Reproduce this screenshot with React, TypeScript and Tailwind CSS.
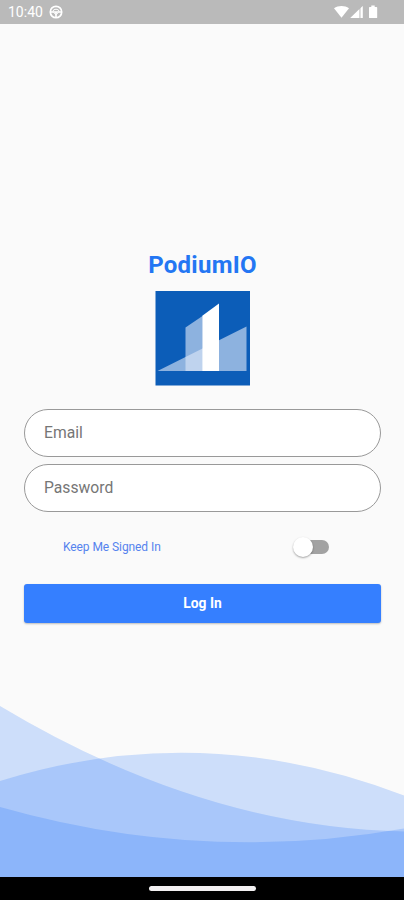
import { useState } from "react";

const StatusBar = () => {
  return (
    <div className="flex h-[24px] items-center justify-between bg-[#bababa] pl-[8px] pr-[26px] text-white">
      <div className="flex items-center gap-[6px]">
        <span className="pt-px text-[14px] leading-[23px]">10:40</span>
        <svg className="h-[14px] w-[14px]" viewBox="0 0 14 14" fill="none" stroke="currentColor">
          <circle cx="7" cy="7" r="5.7" strokeWidth="1.7" />
          <path d="M1.8 7H12.2M7 7V12.5" strokeWidth="1.6" />
          <path d="M3.8 6.8Q4 4.2 7 4.2Q10 4.2 10.2 6.8M4.6 7.4L7 9.8L9.4 7.4" strokeWidth="1" />
        </svg>
      </div>
      <svg className="h-[14px] w-[44px]" viewBox="0 0 44 14" fill="currentColor">
        <path d="M0 3.2C4.2 0.1 10.8 0.1 15 3.2L7.5 12.8Z" />
        <path d="M16.3 13L28.7 1V13Z" opacity="0.45" />
        <path d="M16.3 13L25 4.6V13Z" />
        <path d="M26.8 2.9L28.7 1V13H26.8Z" />
        <path d="M37.3 0.6H40.7V2H42.5Q43.2 2 43.2 2.7V12.4Q43.2 13.1 42.5 13.1H35.7Q35 13.1 35 12.4V2.7Q35 2 35.7 2H37.3Z" />
      </svg>
    </div>
  );
};

const Logo = () => {
  return (
    <svg className="h-[95px] w-[95px]" viewBox="0 0 95 95">
      <rect x="0.5" width="94.5" height="94.5" fill="#0c5db8" />
      <path d="M2.5 80L91.5 35.5V80Z" fill="#8db2df" />
      <path d="M30.5 36.5L47.5 25V80H30.5Z" fill="#8db2df" />
      <path d="M30.5 66L47.5 57.5V80H30.5Z" fill="#bfd3ee" />
      <path d="M47.3 24.7L64 12.5V80H47.3Z" fill="#ffffff" />
    </svg>
  );
};

const Waves = () => {
  return (
    <svg className="block h-[177px] w-full" viewBox="0 700 404 177" preserveAspectRatio="none">
      <g fill="#1b70f9" fillOpacity="0.2">
        <path d="M0 706Q202 827.3 404 831.5V877H0Z" />
        <path d="M0 781Q202 718 404 795.5V877H0Z" />
        <path d="M0 807Q202 864.5 404 828.5V877H0Z" />
      </g>
    </svg>
  );
};

interface FieldProps {
  type: string;
  placeholder: string;
}

const Field: React.FC<FieldProps> = ({ type, placeholder }) => {
  return (
    <input
      type={type}
      placeholder={placeholder}
      className="h-[48px] w-full rounded-full border border-[#999999] bg-white pb-[2px] pl-[19px] pr-4 text-[15.7px] text-black outline-none placeholder:text-[#767676]"
    />
  );
};

const App: React.FC = () => {
  const [keepSigned, setKeepSigned] = useState(false);

  return (
    <div className="flex h-[900px] w-[404px] flex-col overflow-hidden bg-[#fafafa] font-['Roboto',sans-serif]">
      <StatusBar />
      <div className="flex flex-1 flex-col items-center pl-[24px] pr-[23px] pt-[225px]">
        <h1 className="text-[24px] font-bold leading-[32px] tracking-[0.25px] text-[#2376f3]">PodiumIO</h1>
        <div className="mt-[10px]">
          <Logo />
        </div>
        <div className="mt-[23px] flex w-full flex-col gap-[7px]">
          <Field type="text" placeholder="Email" />
          <Field type="password" placeholder="Password" />
        </div>
        <div className="mt-[25px] flex h-[20px] w-full items-center justify-between pl-[39px] pr-[52px]">
          <span className="text-[12px] tracking-[-0.08px] text-[#5583ee]">Keep Me Signed In</span>
          <button
            type="button"
            role="switch"
            aria-checked={keepSigned}
            onClick={() => setKeepSigned(!keepSigned)}
            className={`flex h-[14px] w-[34px] items-center rounded-full bg-[#a2a2a2] ${keepSigned ? "justify-end" : "justify-start"}`}
          >
            <span className="-ml-[2px] h-[20px] w-[20px] shrink-0 rounded-full bg-white shadow-[0_1px_2px_rgba(0,0,0,0.35)]"></span>
          </button>
        </div>
        <button
          type="button"
          className="mt-[27px] h-[39px] w-full rounded-[3px] bg-[#357fff] text-[13.8px] font-bold text-white shadow-[0_1px_2px_rgba(0,0,0,0.25)]"
        >
          Log In
        </button>
      </div>
      <Waves />
      <div className="flex h-[23px] items-center justify-center bg-black">
        <div className="h-[5px] w-[107px] rounded-full bg-[#f2f0f1]"></div>
      </div>
    </div>
  );
};

export default App;
